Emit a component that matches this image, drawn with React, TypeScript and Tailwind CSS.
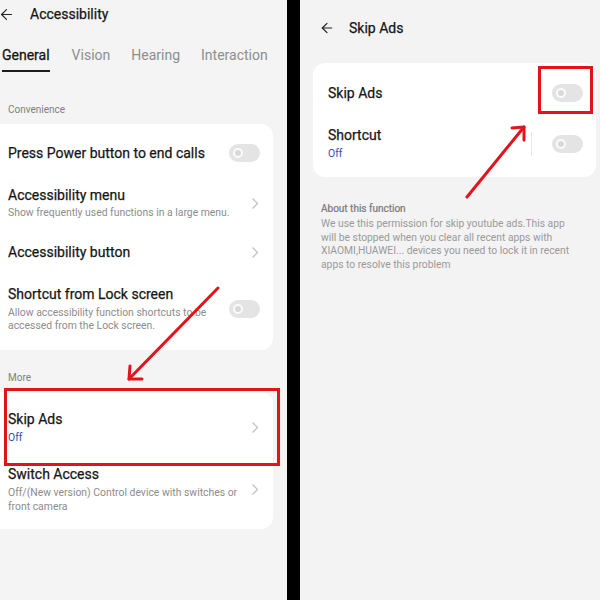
import { ArrowLeft } from 'lucide-react'

function Toggle() {
  return (
    <div className="w-[31px] h-[18px] rounded-full bg-[#e4e4e4] flex items-center pl-[4px]">
      <div className="w-[10px] h-[10px] rounded-full border-[2px] border-[#fbfbfb] bg-[#d9d9d9]" />
    </div>
  )
}

function Chevron() {
  return (
    <svg width="8" height="13" viewBox="0 0 8 13" className="shrink-0">
      <polyline points="1.5,1.5 6.5,6.5 1.5,11.5" fill="none" stroke="#c4c4c4" strokeWidth="1.3" />
    </svg>
  )
}

function Arrow({ x1, y1, x2, y2, a1, a2 }: { x1: number; y1: number; x2: number; y2: number; a1: [number, number]; a2: [number, number] }) {
  return (
    <g stroke="#e3121b" strokeWidth="3" strokeLinecap="round" fill="none">
      <line x1={x1} y1={y1} x2={x2} y2={y2} />
      <polyline points={`${a1[0]},${a1[1]} ${x2},${y2} ${a2[0]},${a2[1]}`} strokeLinejoin="round" />
    </g>
  )
}

const title = 'text-[14px] leading-[18px] text-[#161616] [-webkit-text-stroke:0.25px_#161616]'
const sub = 'text-[10.4px] text-[#8c8c8c]'

function LeftScreen() {
  return (
    <div className="w-[287px] h-full bg-[#f4f4f4] overflow-hidden shrink-0">
      <div className="h-[28px] flex items-center">
        <ArrowLeft size={17} strokeWidth={1.6} className="text-[#222] -ml-[2px]" />
        <span className={`ml-[15px] ${title}`}>Accessibility</span>
      </div>

      <div className="mt-[16px] flex text-[14px] leading-[22px]">
        <div className="ml-[2px] flex flex-col">
          <span className="text-[#161616] [-webkit-text-stroke:0.3px_#161616]">General</span>
          <div className="mt-[4px] h-[2px] bg-[#1c1c1c]" />
        </div>
        <span className="ml-[22px] text-[#8e8e8e]">Vision</span>
        <span className="ml-[21px] text-[#8e8e8e]">Hearing</span>
        <span className="ml-[21px] text-[#8e8e8e]">Interaction</span>
      </div>

      <div className="mt-[31px] pl-[8px] text-[10px] leading-[14px] text-[#808080]">Convenience</div>

      <div className="mt-[7px] -ml-[10px] w-[283px] rounded-[12px] bg-white pt-[5px] pb-[8px]">
        <div className="h-[48px] pl-[18px] pr-[13px] flex items-center justify-between">
          <span className={title}>Press Power button to end calls</span>
          <Toggle />
        </div>
        <div className="h-[52px] pl-[18px] pr-[14px] flex items-center justify-between">
          <div className="flex flex-col">
            <span className={title}>Accessibility menu</span>
            <span className={`mt-[2px] leading-[14px] ${sub}`}>Show frequently used functions in a large menu.</span>
          </div>
          <Chevron />
        </div>
        <div className="h-[46px] pl-[18px] pr-[14px] flex items-center justify-between">
          <span className={title}>Accessibility button</span>
          <Chevron />
        </div>
        <div className="h-[67px] pl-[18px] pr-[13px] flex items-center justify-between">
          <div className="flex flex-col w-[212px]">
            <span className={title}>Shortcut from Lock screen</span>
            <span className={`mt-[3px] leading-[13px] ${sub}`}>Allow accessibility function shortcuts to be accessed from the Lock screen.</span>
          </div>
          <Toggle />
        </div>
      </div>

      <div className="mt-[21px] pl-[8px] text-[10px] leading-[14px] text-[#808080]">More</div>

      <div className="mt-[7px] -ml-[10px] w-[283px] rounded-[12px] bg-white pb-[16px]">
        <div className="pt-[18px] pb-[17px] pl-[18px] pr-[14px] flex items-center justify-between">
          <div className="flex flex-col">
            <span className={title}>Skip Ads</span>
            <span className="mt-[3px] text-[10.4px] leading-[14px] text-[#3a48b0]">Off</span>
          </div>
          <Chevron />
        </div>
        <div className="pt-[3px] pl-[18px] pr-[14px] flex items-center justify-between">
          <div className="flex flex-col w-[238px]">
            <span className={title}>Switch Access</span>
            <span className={`mt-[3px] leading-[13.5px] ${sub}`}>Off/(New version) Control device with switches or front camera</span>
          </div>
          <Chevron />
        </div>
      </div>
    </div>
  )
}

function RightScreen() {
  return (
    <div className="flex-1 h-full bg-[#f3f3f3] overflow-hidden">
      <div className="mt-[14px] h-[28px] pl-[19px] flex items-center">
        <ArrowLeft size={16} strokeWidth={1.8} className="text-[#222]" />
        <span className={`ml-[14px] ${title}`}>Skip Ads</span>
      </div>

      <div className="mt-[21px] ml-[13px] w-[283px] rounded-[12px] bg-white">
        <div className="h-[58px] pt-[2px] pl-[15px] pr-[13px] flex items-center justify-between">
          <span className={title}>Skip Ads</span>
          <Toggle />
        </div>
        <div className="pt-[5px] pb-[16px] pl-[15px] pr-[13px] flex items-center justify-between">
          <div className="flex flex-col">
            <span className={title}>Shortcut</span>
            <span className="mt-[3px] text-[10.4px] leading-[14px] text-[#3a48b0]">Off</span>
          </div>
          <div className="flex items-center">
            <div className="w-px h-[24px] bg-[#e6e6e6] mr-[20px]" />
            <Toggle />
          </div>
        </div>
      </div>

      <div className="mt-[25px] pl-[21px] w-[275px]">
        <div className="text-[10px] leading-[14px] text-[#777] [-webkit-text-stroke:0.2px_#777]">About this function</div>
        <p className="mt-[1px] text-[10.3px] leading-[13.6px] text-[#9a9a9a]">
          We use this permission for skip youtube ads.This app will be stopped when you clear all recent apps with XIAOMI,HUAWEI... devices you need to lock it in recent apps to resolve this problem
        </p>
      </div>
    </div>
  )
}

export default function App() {
  return (
    <div className="relative w-[600px] h-[600px] flex bg-[#f3f3f3]" style={{ fontFamily: 'Roboto, "Noto Sans", sans-serif' }}>
      <LeftScreen />
      <div className="w-[13px] h-full bg-black shrink-0" />
      <RightScreen />

      <div className="absolute left-[4px] top-[388px] w-[276px] h-[78px] border-[3px] border-[#e3121b]" />
      <div className="absolute left-[538px] top-[66px] w-[55px] h-[48px] border-[3px] border-[#e3121b]" />

      <svg className="absolute inset-0 pointer-events-none" width="600" height="600">
        <Arrow x1={218} y1={288} x2={129} y2={379} a1={[130, 366]} a2={[142, 379]} />
        <Arrow x1={467} y1={197} x2={524} y2={127} a1={[512, 128]} a2={[524, 140]} />
      </svg>
    </div>
  )
}
